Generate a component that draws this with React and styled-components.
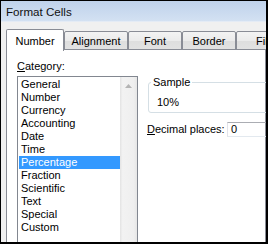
import React from "react";
import styled, { createGlobalStyle } from "styled-components";

const Global = createGlobalStyle`
  html, body { margin: 0; padding: 0; background: #fff; }
  * { box-sizing: border-box; }
`;

const Window = styled.div`
  width: 268px;
  height: 244px;
  overflow: hidden;
  border-style: solid;
  border-color: #000;
  border-width: 1px 2px 2px 1px;
  background: #f0f0f0;
  display: flex;
  flex-direction: column;
  font-family: "Liberation Sans", Arial, sans-serif;
  font-size: 11px;
  color: #000;
`;

const TitleBar = styled.div`
  height: 21px;
  flex: none;
  display: flex;
  align-items: center;
  padding-left: 5px;
  background: linear-gradient(#bfd2eb, #d3e1f2);
  border-bottom: 1px solid #e4ebf5;
  font-size: 11.6px;
  color: #111;
`;

const Body = styled.div`
  flex: 1;
  overflow: hidden;
  padding: 6px 0 0 5px;
`;

const TabStrip = styled.div`
  display: flex;
  align-items: flex-end;
  height: 22px;
  position: relative;
  z-index: 1;
`;

const Tab = styled.div`
  flex: none;
  width: ${(p) => p.$w}px;
  height: ${(p) => (p.$active ? 22 : 19)}px;
  border: 1px solid #898c95;
  border-bottom: ${(p) => (p.$active ? "none" : "1px solid #898c95")};
  border-radius: 2px 2px 0 0;
  background: ${(p) =>
    p.$active ? "#fff" : "linear-gradient(#f3f3f3, #ebebeb 50%, #dedede 51%, #e2e2e2)"};
  display: flex;
  align-items: center;
  justify-content: center;
  padding-top: ${(p) => (p.$active ? 1 : 0)}px;
  margin-bottom: ${(p) => (p.$active ? -1 : 0)}px;
  white-space: nowrap;
`;

const Panel = styled.div`
  height: 260px;
  margin-top: -1px;
  border: 1px solid #898c95;
  background: #fff;
  display: flex;
  align-items: flex-start;
  gap: 9px;
  padding-left: 10px;
`;

const LeftCol = styled.div`
  padding-top: 10px;
  display: flex;
  flex-direction: column;
`;

const Label = styled.div`
  line-height: 13px;
  white-space: nowrap;
  width: ${(p) => (p.$w ? `${p.$w}px` : "auto")};
`;

const ListBox = styled.div`
  margin-top: 3px;
  width: 121px;
  height: 200px;
  border: 1px solid #828790;
  display: flex;
`;

const Items = styled.div`
  flex: 1;
  padding-top: 1px;
`;

const Item = styled.div`
  height: 13px;
  line-height: 13px;
  margin-left: 1px;
  padding-left: 2px;
  background: ${(p) => (p.$selected ? "#3399ff" : "transparent")};
  color: ${(p) => (p.$selected ? "#fff" : "#000")};
`;

const ScrollBar = styled.div`
  width: 17px;
  flex: none;
  background: linear-gradient(to right, #e3e3e3, #f2f2f2 15%, #efefef 80%, #e6e6e6);
  display: flex;
  justify-content: center;
  padding-top: 7px;
`;

const RightCol = styled.div`
  padding-top: 26px;
  display: flex;
  flex-direction: column;
  width: 140px;
`;

const Group = styled.fieldset`
  margin: 0 -30px 0 1px;
  border: 1px solid #d5dfe5;
  border-radius: 3px;
  padding: 7px 0 3px 8px;
  min-width: 0;
`;

const Legend = styled.legend`
  margin-left: -6px;
  padding: 0 2px;
  line-height: 13px;
`;

const SampleText = styled.div`
  line-height: 13px;
`;

const Row = styled.div`
  margin-top: 9px;
  display: flex;
  align-items: center;
`;

const Input = styled.div`
  width: 60px;
  height: 15px;
  border: 1px solid #e3e9ef;
  border-top-color: #abadb3;
  border-left-color: #e2e3ea;
  padding-left: 3px;
  line-height: 13px;
  flex: none;
`;

const categories = [
  "General",
  "Number",
  "Currency",
  "Accounting",
  "Date",
  "Time",
  "Percentage",
  "Fraction",
  "Scientific",
  "Text",
  "Special",
  "Custom",
];

const tabs = [
  { label: "Number", w: 58, active: true },
  { label: "Alignment", w: 64 },
  { label: "Font", w: 54 },
  { label: "Border", w: 54 },
  { label: "Fill", w: 54 },
];

export default function App() {
  return (
    <>
      <Global />
      <Window>
        <TitleBar>Format Cells</TitleBar>
        <Body>
          <TabStrip>
            {tabs.map((t) => (
              <Tab key={t.label} $w={t.w} $active={t.active}>
                {t.label}
              </Tab>
            ))}
          </TabStrip>
          <Panel>
            <LeftCol>
              <Label>
                <u>C</u>ategory:
              </Label>
              <ListBox>
                <Items>
                  {categories.map((c) => (
                    <Item key={c} $selected={c === "Percentage"}>
                      {c}
                    </Item>
                  ))}
                </Items>
                <ScrollBar>
                  <svg width="7" height="4" viewBox="0 0 7 4">
                    <path d="M0 4 L3.5 0 L7 4 Z" fill="#b4b4b4" />
                  </svg>
                </ScrollBar>
              </ListBox>
            </LeftCol>
            <RightCol>
              <Group>
                <Legend>Sample</Legend>
                <SampleText>10%</SampleText>
              </Group>
              <Row>
                <Label $w={83}>
                  <u>D</u>ecimal places:
                </Label>
                <Input>0</Input>
              </Row>
            </RightCol>
          </Panel>
        </Body>
      </Window>
    </>
  );
}
